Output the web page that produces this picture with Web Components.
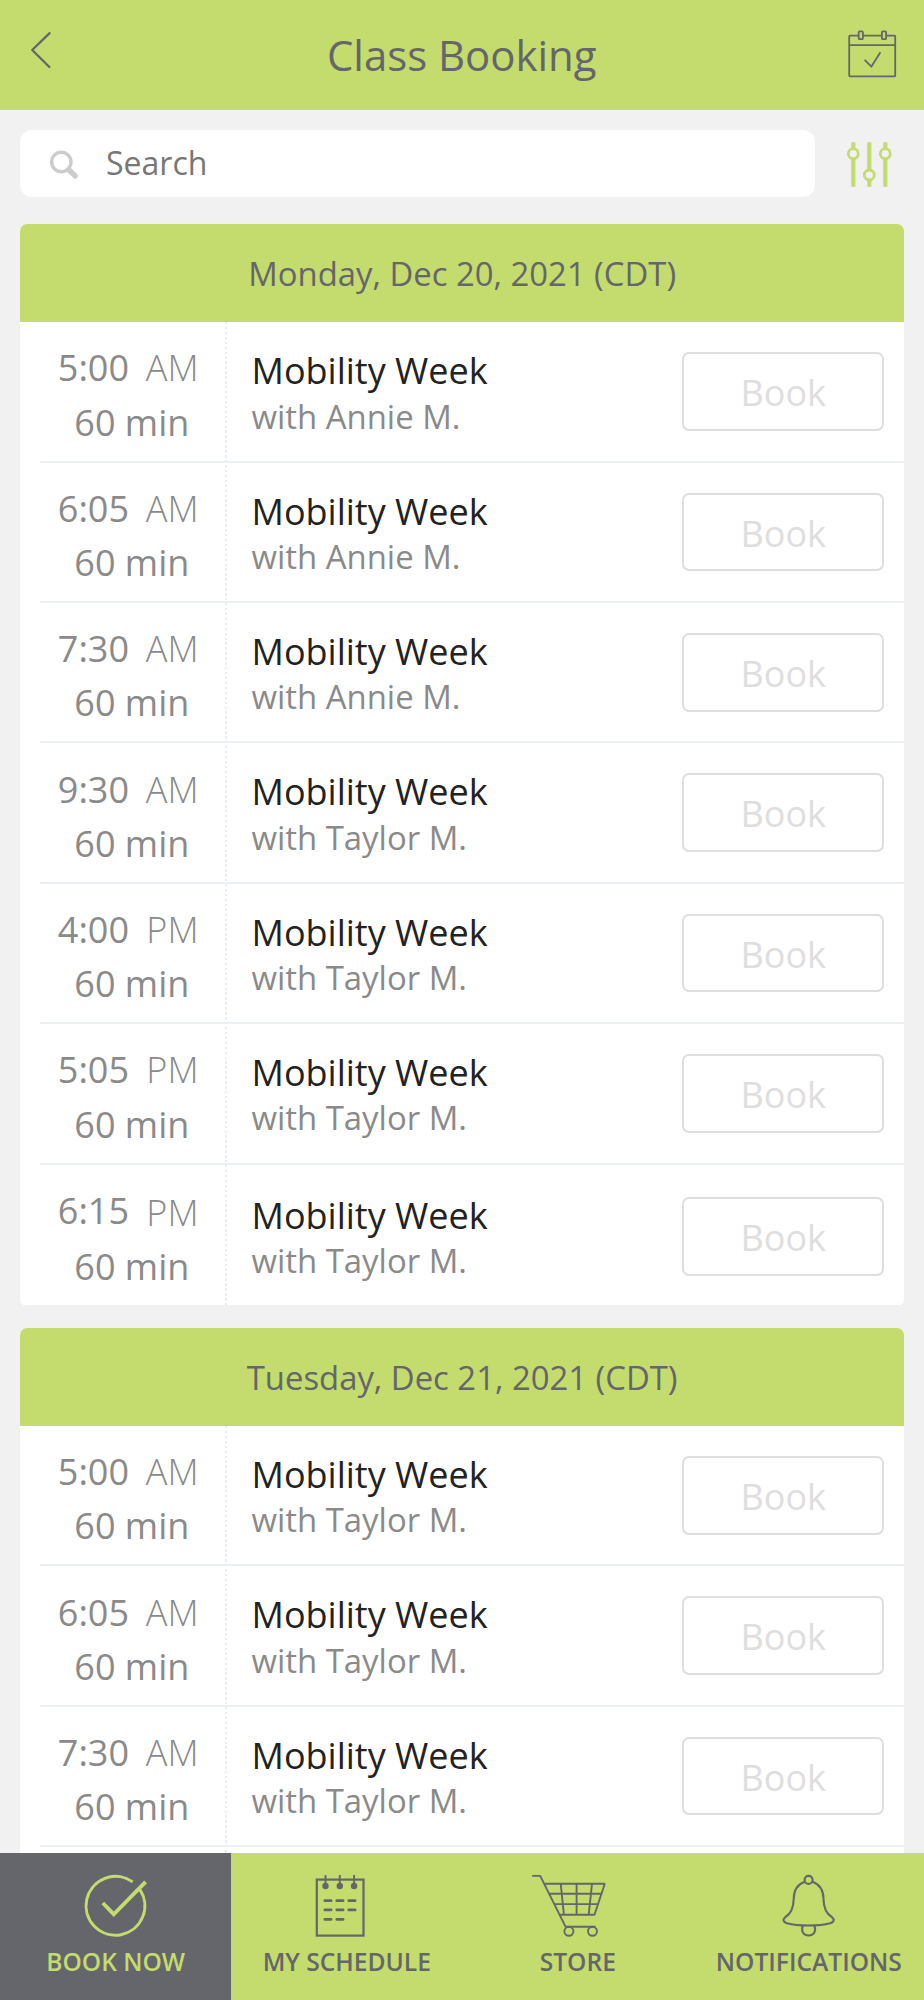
<!DOCTYPE html>
<html lang="en">
<head>
<meta charset="utf-8">
<title>Class Booking</title>
<style>
html,body{margin:0;padding:0}
body{width:924px;height:2000px;overflow:hidden;background:#f1f1f1;font-family:"Open Sans","Noto Sans",sans-serif;
--green:#c4db6d;--slate:#65666b;--page:#f1f1f1;--rule:#ebf0f2}
</style>
</head>
<body>
<booking-app></booking-app>
<script>
const define=(name,html)=>{
  const template=document.createElement('template');
  template.innerHTML=html;
  customElements.define(name,class extends HTMLElement{
    constructor(){
      super();
      this.attachShadow({mode:'open'}).append(template.content.cloneNode(true));
    }
  });
};

define('top-bar',`<style>
:host{display:flex;box-sizing:border-box;height:110.3px;background:var(--green);color:var(--slate);justify-content:space-between;padding:28px 26px 0 28px}
svg{display:block;fill:none;stroke:currentColor}
h1{margin:-.8px 0 0;font-size:41.900px;line-height:56px;font-weight:400;padding-right:2.500px}
</style>
<svg width="52" height="44" viewBox="28 28 52 44" stroke-width="2.3" stroke-linecap="round" stroke-linejoin="round"><path d="M49.6 33.2 32.2 50l17.2 17"/></svg>
<h1><slot></slot></h1>
<svg width="52" height="52" viewBox="846 28 52 52" stroke-width="1.8"><path d="M858.7 35.6H850q-.8 0-.8.8V75.500q0 .8.8.8H894.400q.8 0 .8-.8V36.400q0-.8-.8-.8H886.200M863 35.600H881.800M849.200 45.200H895.200" /><rect x="858.700" y="31.300" width="4.200" height="7.900" rx="1"/><rect x="881.900" y="31.300" width="4.200" height="7.900" rx="1"/><path d="m864.600 59.800 6.800 6.800 9-14.300"/></svg>`);

define('search-bar',`<style>
:host{display:flex;align-items:flex-start;padding:19.7px 28px 0 20px;justify-content:space-between;height:114px;box-sizing:border-box}
.field{display:flex;align-items:center;width:795px;height:66.600px;border-radius:12px;background:#fff;color:#777;font-size:32px;line-height:44px;box-sizing:border-box;padding:0 0 1px 28px}
.field svg{margin:2px 26px 0 0}
svg{display:block;fill:none}
.filter{margin-top:10px;stroke:var(--green)}
</style>
<div class="field"><svg width="32" height="32" viewBox="48 148 32 32" stroke="#ccc"><circle cx="61.300" cy="162" r="9.700" stroke-width="3.400"/><path d="m69 170 6.300 6" stroke-width="5.200" stroke-linecap="round"/></svg><span><slot></slot></span></div>
<svg class="filter" width="52" height="50" viewBox="844 140 52 50"><path stroke-width="4.200" d="M853.300 142.300v6.500M853.300 158.600V186.700M869.300 142.300V170M869.300 180v6.700M885.300 142.300v6.500M885.300 158.600V186.700"/><g stroke-width="2.800"><circle cx="853.300" cy="153.700" r="5"/><circle cx="869.300" cy="175" r="5"/><circle cx="885.300" cy="153.700" r="5"/></g></svg>`);

define('day-card',`<style>
:host{display:block;width:884.300px;border-radius:7px;overflow:hidden;background:#fff;flex:none}
header{height:98.300px;line-height:99.200px;box-sizing:border-box;background:var(--green);color:var(--slate);font-size:32.850px;text-align:center}
.rows{display:block;background:repeating-linear-gradient(#e9eef0 0 2.400px,transparent 2.400px 4.930px) 204.600px 0/2.300px 100% no-repeat}
</style>
<header><slot name="date"></slot></header>
<div class="rows"><slot></slot></div>`);

define('book-button',`<style>
:host{display:flex;box-sizing:border-box;width:202px;height:78.500px;border:2px solid #dedede;border-radius:7px;background:#fff;color:#dedede;font-size:36px;line-height:77px;justify-content:center}
</style><slot></slot>`);

define('class-row',`<style>
:host{display:flex;box-sizing:border-box;height:140.400px;position:relative}
:host::after{content:"";position:absolute;left:20px;right:0;bottom:0;height:2px;background:var(--rule)}
:host([last]){height:141.700px}
:host([last])::after{left:0;height:1px}
.when{flex:none;width:178.500px;margin-right:53px;padding-top:19.100px;font-size:36px;line-height:54.200px;color:#8a8a8a;text-align:right;white-space:nowrap}
.time{display:flex;justify-content:space-between;padding-left:37.800px}
.half{font-weight:300}
.len{padding-right:9.200px}
.what{flex:1;padding-top:24px;white-space:nowrap}
.name{color:#222;font-size:36px;line-height:49.200px}
.coach{color:#8a8a8a;font-size:32.900px;line-height:42.300px}
book-button{margin:30px 20px 0 0}
:host([last]) .when{padding-top:21.500px}
:host([last]) .num{position:relative;top:-2.200px}
:host([last]) .what{padding-top:26.500px}
:host([last]) book-button{margin-top:32.500px}
</style>
<div class="when"><div class="time"><span class="num"><slot name="time"></slot></span><span class="half"><slot name="half"></slot></span></div><div class="len"><slot name="length"></slot></div></div>
<div class="what"><div class="name"><slot></slot></div><div class="coach"><slot name="coach"></slot></div></div>
<book-button>Book</book-button>`);

define('nav-tab',`<style>
:host{display:flex;flex-direction:column;align-items:center;box-sizing:border-box;padding-top:17.300px;color:var(--slate);font-size:24.600px;font-weight:600;line-height:34px;white-space:nowrap}
:host([active]){background:var(--slate);color:var(--green)}
.label{margin-top:5px}
</style><slot name="icon"></slot><span class="label"><slot></slot></span>`);

define('nav-bar',`<style>
:host{display:grid;grid-template-columns:231.300px repeat(3,231px);flex:none;height:147.300px;background:var(--green)}
svg{display:block;fill:none;stroke:currentColor}
</style>
<nav-tab active><svg slot="icon" width="70" height="70" viewBox="80.900 1870 70 70"><path stroke-width="3" d="M132.500 1881.900A29.400 29.400 0 1 0 139.700 1889.300"/><path stroke-width="3.900" d="m102.700 1903 11 11.300 31.800-32.500"/></svg>BOOK NOW</nav-tab>
<nav-tab><svg slot="icon" width="70" height="70" viewBox="312.200 1870 70 70" stroke-width="2.200"><rect x="317" y="1879.600" width="46.700" height="56"/><path stroke-width="1.900" d="M325.700 1875v9M340 1875v9M354.300 1875v9"/><g fill="currentColor" stroke="none"><circle cx="325.700" cy="1886" r="3.200"/><circle cx="340" cy="1886" r="3.200"/><circle cx="354.300" cy="1886" r="3.200"/></g><path stroke-width="2.700" stroke-linecap="round" d="M325 1900.700h6.300M337 1900.700h6.300M349 1900.700h6.300M325 1909.900h6.300M337 1909.900h6.300M349 1909.900h6.300M325 1919.400h6.300M337 1919.400h6.300"/></svg>MY SCHEDULE</nav-tab>
<nav-tab><svg slot="icon" width="90" height="70" viewBox="532.800 1870 90 70" stroke-width="1.900" stroke-linejoin="bevel" overflow="visible"><path d="M532 1875.900h8L565.300 1926.700H595.300M544 1883.700H604.600L594.300 1914.700H559M549 1893.700H601.300M554 1904.100H598M560.500 1883.700 563.700 1914.700M576.400 1883.700V1914.700M591.800 1883.700 588.500 1914.700"/><circle cx="568.700" cy="1931.300" r="4.500"/><circle cx="592.300" cy="1931.300" r="4.500"/></svg>STORE</nav-tab>
<nav-tab><svg slot="icon" width="70" height="70" viewBox="774.100 1870 70 70" stroke-width="2.100"><circle cx="808.700" cy="1879.900" r="4"/><path d="M804.800 1881.700C797 1884.500 793.900 1891 793.800 1899C793.600 1909 790.500 1914 785.500 1917C782.500 1919.500 783 1922 787 1923.300C799 1926.300 818.400 1926.300 830.400 1923.300C834.400 1922 834.900 1919.500 831.900 1917C826.900 1914 823.800 1909 823.600 1899C823.500 1891 820.400 1884.500 812.600 1881.700M802.700 1926C801 1932 804 1935.500 808.700 1935.500S816.400 1932 814.700 1926"/></svg>NOTIFICATIONS</nav-tab>`);

const days=[
  ['Monday, Dec 20, 2021 (CDT)',[['5:00','AM','Annie'],['6:05','AM','Annie'],['7:30','AM','Annie'],['9:30','AM','Taylor'],['4:00','PM','Taylor'],['5:05','PM','Taylor'],['6:15','PM','Taylor']],true],
  ['Tuesday, Dec 21, 2021 (CDT)',[['5:00','AM','Taylor'],['6:05','AM','Taylor'],['7:30','AM','Taylor']],false]
];
const row=([time,half,coach],last)=>`<class-row${last?' last':''}><span slot="time">${time}</span><span slot="half">${half}</span><span slot="length">60 min</span>Mobility Week<span slot="coach">with ${coach} M.</span></class-row>`;
const card=([date,rows,complete])=>`<day-card><span slot="date">${date}</span>${rows.map((r,i)=>row(r,complete&&i===rows.length-1)).join('')}${complete?'':'<div class="more"></div>'}</day-card>`;

define('booking-app',`<style>
:host{display:flex;flex-direction:column;width:924px;height:2000px;overflow:hidden;background:var(--page)}
top-bar,search-bar{flex:none}
main{flex:1;min-height:0;overflow:hidden;display:flex;flex-direction:column;gap:21.400px;padding:0 20px;margin-top:-.3px}
.more{height:40px}
</style>
<top-bar>Class Booking</top-bar>
<search-bar>Search</search-bar>
<main>${days.map(card).join('')}</main>
<nav-bar></nav-bar>`);
</script>
</body>
</html>
